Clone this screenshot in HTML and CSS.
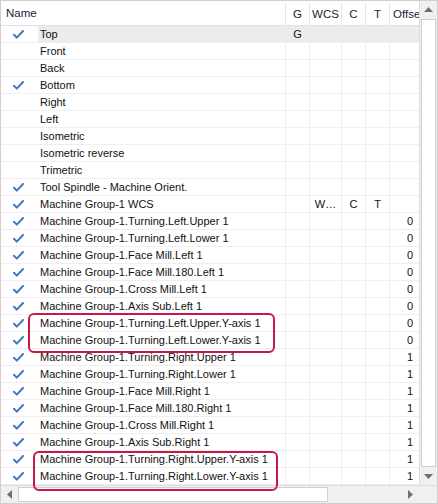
FILE: index.html
```html
<!DOCTYPE html>
<html>
<head>
<meta charset="utf-8">
<link rel="stylesheet" href="styles.css">
</head>
<body>
<div class="grid">
  <div class="main">
    <div class="table">
      <div class="hdr row">
        <div class="c chk hname">Name</div>
        <div class="c name"></div>
        <div class="c g ctr sep">G</div>
        <div class="c wcs ctr sep">WCS</div>
        <div class="c cc ctr sep">C</div>
        <div class="c t ctr sep">T</div>
        <div class="c off sep hoff">Offse</div>
      </div>
      <div id="rows"></div>
    </div>
    <div class="vscroll">
      <div class="sbtn"><svg width="9" height="5" viewBox="0 0 9 5"><path d="M0 5 L4.5 0 L9 5Z" fill="#6f6f6f"/></svg></div>
      <div class="vthumb"></div>
      <div class="sbtn"><svg width="9" height="5" viewBox="0 0 9 5"><path d="M0 0 L4.5 5 L9 0Z" fill="#6f6f6f"/></svg></div>
    </div>
  </div>
  <div class="hscroll">
    <div class="hbtn"><svg width="5" height="9" viewBox="0 0 5 9"><path d="M5 0 L0 4.5 L5 9Z" fill="#6f6f6f"/></svg></div>
    <div class="htrack"><div class="hthumb"></div></div>
    <div class="hbtn"><svg width="5" height="9" viewBox="0 0 5 9"><path d="M0 0 L5 4.5 L0 9Z" fill="#6f6f6f"/></svg></div>
    <div class="corner"></div>
  </div>
  <div class="mark mark1"></div>
  <div class="mark mark2"></div>
</div>
<script src="app.js"></script>
</body>
</html>
```

FILE: app.js
```js
const data = [
  [1,"Top","G","","","",""],
  [0,"Front","","","","",""],
  [0,"Back","","","","",""],
  [1,"Bottom","","","","",""],
  [0,"Right","","","","",""],
  [0,"Left","","","","",""],
  [0,"Isometric","","","","",""],
  [0,"Isometric reverse","","","","",""],
  [0,"Trimetric","","","","",""],
  [1,"Tool Spindle - Machine Orient.","","","","",""],
  [1,"Machine Group-1 WCS","","W…","C","T",""],
  [1,"Machine Group-1.Turning.Left.Upper 1","","","","","0"],
  [1,"Machine Group-1.Turning.Left.Lower 1","","","","","0"],
  [1,"Machine Group-1.Face Mill.Left 1","","","","","0"],
  [1,"Machine Group-1.Face Mill.180.Left 1","","","","","0"],
  [1,"Machine Group-1.Cross Mill.Left 1","","","","","0"],
  [1,"Machine Group-1.Axis Sub.Left 1","","","","","0"],
  [1,"Machine Group-1.Turning.Left.Upper.Y-axis 1","","","","","0"],
  [1,"Machine Group-1.Turning.Left.Lower.Y-axis 1","","","","","0"],
  [1,"Machine Group-1.Turning.Right.Upper 1","","","","","1"],
  [1,"Machine Group-1.Turning.Right.Lower 1","","","","","1"],
  [1,"Machine Group-1.Face Mill.Right 1","","","","","1"],
  [1,"Machine Group-1.Face Mill.180.Right 1","","","","","1"],
  [1,"Machine Group-1.Cross Mill.Right 1","","","","","1"],
  [1,"Machine Group-1.Axis Sub.Right 1","","","","","1"],
  [1,"Machine Group-1.Turning.Right.Upper.Y-axis 1","","","","","1"],
  [1,"Machine Group-1.Turning.Right.Lower.Y-axis 1","","","","","1"]
];
const check = '<svg width="11" height="9" viewBox="0 0 11 9"><path d="M1 4.8 L3.8 7.6 L10 1" fill="none" stroke="#3a7cc4" stroke-width="2" stroke-linecap="round" stroke-linejoin="round"/></svg>';
const rows = document.getElementById("rows");
data.forEach((d, i) => {
  const r = document.createElement("div");
  r.className = "row body" + (i === 0 ? " sel" : "");
  r.innerHTML =
    '<div class="c chk">' + (d[0] ? check : "") + '</div>' +
    '<div class="c name">' + d[1] + '</div>' +
    '<div class="c g ctr sep">' + d[2] + '</div>' +
    '<div class="c wcs ctr sep">' + d[3] + '</div>' +
    '<div class="c cc ctr sep">' + d[4] + '</div>' +
    '<div class="c t ctr sep">' + d[5] + '</div>' +
    '<div class="c off sep num">' + d[6] + '</div>';
  rows.appendChild(r);
});
```

FILE: styles.css
```css
html, body { margin: 0; padding: 0; background: #fff; }
.grid {
  position: relative;
  width: 438px;
  height: 504px;
  box-sizing: border-box;
  border: 1px solid #cfcfcf;
  font-family: "Liberation Sans", Arial, sans-serif;
  font-size: 11px;
  color: #111;
  overflow: hidden;
  display: flex;
  flex-direction: column;
}
.main { display: flex; height: 485px; }
.table { width: 418px; overflow: hidden; }
.row { display: flex; white-space: nowrap; }
.hdr { height: 24px; border-bottom: 1px solid #e2e2e2; color: #1b1b3a; font-size: 11.5px; }
.body { height: 16px; border-bottom: 1px solid #efefef; }
.c { flex: none; display: flex; align-items: center; overflow: hidden; box-sizing: border-box; }
.chk { width: 37px; justify-content: flex-start; padding-left: 12px; }
.hdr .chk { width: 37px; justify-content: flex-start; padding-left: 5px; overflow: visible; }
.name { width: 247px; padding-left: 2px; }
.g { width: 24px; }
.wcs { width: 32px; }
.cc { width: 24px; }
.t { width: 24px; }
.off { width: 30px; }
.ctr { justify-content: center; }
.sep { border-left: 1px solid #efefef; }
.hdr .sep { border-left: 1px solid #e6e6e6; margin: 2px 0 0; height: 22px; }
.hoff { padding-left: 3px; }
.num { justify-content: flex-end; padding-right: 6px; }
.sel .name, .sel .g, .sel .wcs, .sel .cc, .sel .t, .sel .off { background: #ececec; }
.vscroll {
  width: 18px;
  background: #f0f0f0;
  border-left: 1px solid #dcdcdc;
  box-sizing: border-box;
  display: flex;
  flex-direction: column;
}
.sbtn { height: 17px; display: flex; align-items: center; justify-content: center; flex: none; }
.vthumb { flex: 1; background: #fff; border: 1px solid #d0d0d0; margin: 1px 1px; }
.hscroll { display: flex; height: 17px; background: #f0f0f0; border-top: 1px solid #dcdcdc; }
.hbtn { width: 17px; display: flex; align-items: center; justify-content: center; flex: none; }
.htrack { flex: 1; display: flex; align-items: stretch; padding: 1px 0; }
.hthumb { width: 308px; background: #fff; border: 1px solid #d0d0d0; }
.corner { width: 18px; flex: none; background: #f0f0f0; }
.mark {
  position: absolute;
  border: 2px solid #c8174a;
  border-radius: 6px;
  box-sizing: border-box;
}
.mark1 { left: 27px; top: 312px; width: 247px; height: 40px; }
.mark2 { left: 32px; top: 450px; width: 245px; height: 40px; }
```
